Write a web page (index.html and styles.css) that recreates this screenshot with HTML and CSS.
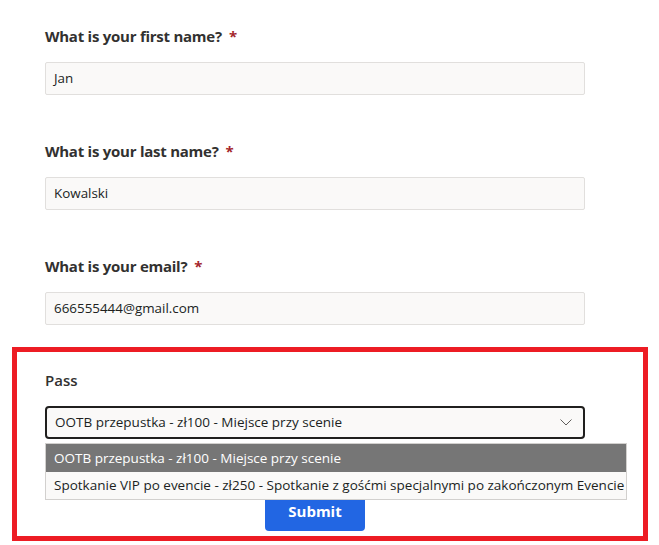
FILE: index.html
```html
<!DOCTYPE html>
<html>
<head>
<meta charset="utf-8">
<link rel="stylesheet" href="styles.css">
</head>
<body>
<div class="form">
  <div class="field">
    <div class="label">What is your first name?<span class="req">*</span></div>
    <div class="input">Jan</div>
  </div>
  <div class="field">
    <div class="label">What is your last name?<span class="req">*</span></div>
    <div class="input">Kowalski</div>
  </div>
  <div class="field">
    <div class="label">What is your email?<span class="req">*</span></div>
    <div class="input">666555444@gmail.com</div>
  </div>
</div>
<div class="highlight">
  <div class="pass-field">
    <div class="label plain">Pass</div>
    <div class="select">
      <span>OOTB przepustka - zł100 - Miejsce przy scenie</span>
      <svg class="chev" width="12" height="7" viewBox="0 0 12 7"><path d="M0.5 0.5 L6 6 L11.5 0.5" fill="none" stroke="#605e5c" stroke-width="1"/></svg>
      <div class="list">
        <div class="opt sel">OOTB przepustka - zł100 - Miejsce przy scenie</div>
        <div class="opt">Spotkanie VIP po evencie - zł250 - Spotkanie z gośćmi specjalnymi po zakończonym Evencie</div>
      </div>
    </div>
    <div class="actions"><button class="submit">Submit</button></div>
  </div>
</div>
</body>
</html>
```
FILE: styles.css
```css
html, body { margin: 0; padding: 0; background: #fff; }
body { font-family: "Open Sans", "Noto Sans", sans-serif; color: #323130; }
.form { padding: 26px 0 0 45px; width: 540px; display: flex; flex-direction: column; gap: 46px; }
.label { font-size: 15px; font-weight: 700; line-height: 20px; height: 20px; color: #323130; letter-spacing: -0.25px; }
.req { color: #a4262c; margin-left: 7px; }
.input { margin-top: 16px; height: 31px; border: 1px solid #e1dfdd; border-radius: 2px; background: #faf9f8; font-size: 13.4px; line-height: 31px; padding-left: 8px; color: #201f1e; }
.highlight { margin: 22px 0 0 12px; width: 626px; border: 5px solid #ed1c24; height: 184px; }
.pass-field { position: relative; margin: 18px 0 0 28px; width: 540px; }
.label.plain { font-weight: 600; letter-spacing: 0; }
.select { position: relative; margin-top: 16px; height: 29px; border: 2px solid #201f1e; border-radius: 4px; background: #faf9f8; font-size: 13.5px; line-height: 29px; padding-left: 8px; color: #201f1e; display: flex; align-items: center; justify-content: space-between; }
.chev { margin-right: 11px; }
.list { position: absolute; left: -2px; top: 35px; width: 580px; border: 1px solid #d2d0ce; background: #faf9f8; z-index: 2; }
.opt { height: 27px; line-height: 27px; padding-left: 8px; font-size: 13.5px; color: #201f1e; white-space: nowrap; }
.opt.sel { background: #767676; color: #fff; height: 28px; line-height: 28px; }
.actions { display: flex; justify-content: center; margin-top: 56px; }
.submit { width: 100px; height: 36px; border: none; border-radius: 4px; background: #2266e3; color: #fff; font-family: inherit; font-size: 15px; font-weight: 700; padding: 0 0 5px; }
```
